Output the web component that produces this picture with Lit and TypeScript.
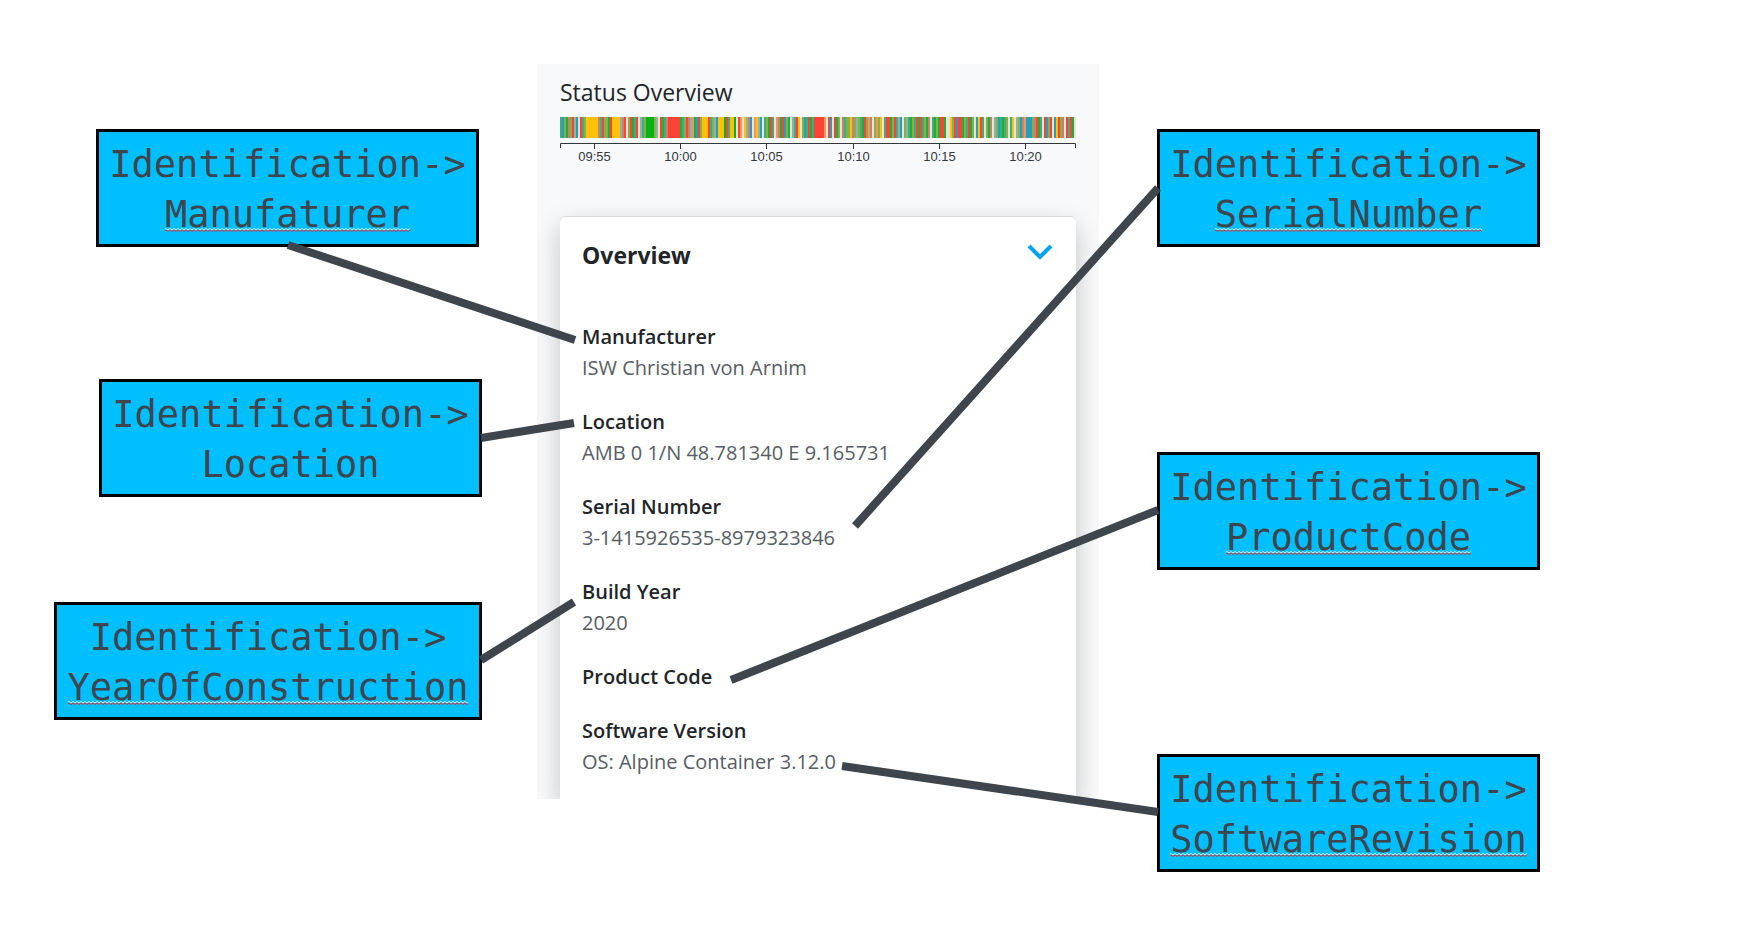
import { LitElement, html, svg, css } from "lit";
import { customElement, property, state } from "lit/decorators.js";
import { styleMap } from "lit/directives/style-map.js";

/* One character per two-pixel slice of the machine status history. */
const HISTORY = [
  "tbngpnrsbwrtn",
  "yyyyyy",
  "ptrnngr",
  "yyy",
  "ysprwnrgtrwstn",
  "GGGG",
  "nswrgtp",
  "rrrrrr",
  "gtnrpsogbrn",
  "yyy",
  "rtnsb",
  "yyyGrtyyG",
  "wrowyspbwoysb",
  "wtngrtwopgrbn",
  "gwstrywnbtrgt",
  "rrrr",
  "rowrbwrgnwptn",
  "nypnsntgrnopw",
  "nonywtrrgnrts",
  "bwnstgntrgrtn",
  "gpwtgngrrg",
  "ww",
  "ynrbrrgntrgnwbyrt",
  "w",
  "ngpwsnbtgtnwtywsnbpo",
  "bbb",
  "nprgtwrbnrwbyrnpwrtrgw",
].join("");

const TONES: Record<string, string> = {
  G: "#07b313",
  g: "#1fae3a",
  r: "#ff4136",
  y: "#ffc107",
  b: "#22a0bd",
  t: "#3fae7c",
  n: "#86b04a",
  p: "#c9806c",
  o: "#f0965e",
  s: "#8fb3a4",
  w: "#e6e4d8",
};

const TICKS = ["09:55", "10:00", "10:05", "10:10", "10:15", "10:20"];

const DETAILS: { label: string; value?: string }[] = [
  { label: "Manufacturer", value: "ISW Christian von Arnim" },
  { label: "Location", value: "AMB 0 1/N 48.781340 E 9.165731" },
  { label: "Serial Number", value: "3-1415926535-8979323846" },
  { label: "Build Year", value: "2020" },
  { label: "Product Code" },
  { label: "Software Version", value: "OS: Alpine Container 3.12.0" },
];

/* Node and connector positions are measured from the panel's top left corner. */
interface Note {
  name: string;
  x: number;
  y: number;
  width: number;
  marked: boolean;
  line: [number, number, number, number];
}

const NOTES: Note[] = [
  { name: "Manufaturer", x: -441, y: 65, width: 383, marked: true, line: [-249, 181, 38, 276] },
  { name: "Location", x: -438, y: 315, width: 383, marked: false, line: [-56, 374, 37, 359] },
  { name: "YearOfConstruction", x: -483, y: 538, width: 428, marked: true, line: [-56, 596, 37, 538] },
  { name: "SerialNumber", x: 620, y: 65, width: 383, marked: true, line: [621, 124, 318, 462] },
  { name: "ProductCode", x: 620, y: 388, width: 383, marked: true, line: [621, 446, 194, 616] },
  { name: "SoftwareRevision", x: 620, y: 690, width: 383, marked: true, line: [621, 748, 305, 702] },
];

@customElement("status-history")
export class StatusHistory extends LitElement {
  static styles = css`
    :host {
      display: block;
    }
    .title {
      margin: 0 0 9px;
      font-size: 23px;
      font-weight: 500;
      line-height: 32px;
      color: #212529;
    }
    .strip {
      display: block;
      width: 100%;
      height: 21px;
    }
    .axis {
      display: block;
      width: 100%;
      height: 30px;
      overflow: visible;
    }
    .axis text {
      font: 13px "Liberation Sans", Arial, sans-serif;
      fill: #33373b;
      text-anchor: middle;
    }
    .axis path {
      fill: none;
      stroke: #33373b;
    }
  `;

  render() {
    return html`
      <h2 class="title">Status Overview</h2>
      <svg
        class="strip"
        viewBox="0 0 ${HISTORY.length} 1"
        preserveAspectRatio="none"
        role="img"
        aria-label="Machine status history"
      >
        ${[...HISTORY].map(
          (c, i) => svg`<rect x=${i} width="1.1" height="1" fill=${TONES[c]}></rect>`
        )}
      </svg>
      <svg class="axis" viewBox="0 0 516 30">
        <path d="M0.5 10V5.5H515.5V10"></path>
        ${TICKS.map((t, i) => {
          const x = Math.round(34 + i * 86.2);
          return svg`<path d="M${x + 0.5} 5.5V11"></path><text x=${x + 0.5} y="23">${t}</text>`;
        })}
      </svg>
    `;
  }
}

@customElement("overview-card")
export class OverviewCard extends LitElement {
  @state() private open = true;

  static styles = css`
    :host {
      display: block;
      border-top: 1px solid #d9dadb;
      border-radius: 6px 6px 0 0;
      background: #fff;
      box-shadow: 0 10px 26px rgba(0, 0, 0, 0.22);
      padding: 22px;
    }
    .head {
      display: flex;
      justify-content: space-between;
      align-items: flex-start;
    }
    .title {
      margin: 0;
      font-size: 23px;
      font-weight: 700;
      line-height: 32px;
      color: #212529;
    }
    .toggle {
      display: flex;
      border: 0;
      padding: 4px 0;
      background: none;
      cursor: pointer;
    }
    .list {
      display: flex;
      flex-direction: column;
      gap: 23px;
      margin: 50px 0 0;
      font-size: 20px;
      line-height: 31px;
    }
    .label {
      font-weight: 600;
      color: #212529;
    }
    .value {
      margin: 0;
      color: #575d64;
    }
  `;

  render() {
    return html`
      <div class="head">
        <h3 class="title">Overview</h3>
        <button
          class="toggle"
          aria-label="Toggle overview"
          aria-expanded=${this.open ? "true" : "false"}
          @click=${() => (this.open = !this.open)}
        >
          <svg width="28" height="20" viewBox="0 0 28 20" fill="none" stroke="#00a3e8" stroke-width="4">
            <path d="M3 3L14 14L25 3"></path>
          </svg>
        </button>
      </div>
      ${this.open
        ? html`<dl class="list">
            ${DETAILS.map(
              (d) => html`<div>
                <dt class="label">${d.label}</dt>
                ${d.value ? html`<dd class="value">${d.value}</dd>` : null}
              </div>`
            )}
          </dl>`
        : null}
    `;
  }
}

@customElement("node-note")
export class NodeNote extends LitElement {
  @property() name = "";
  @property({ type: Boolean }) marked = false;

  static styles = css`
    :host {
      display: block;
      box-sizing: border-box;
      border: 3px solid #000;
      background: #00bfff;
      padding: 8px 0 4px;
      color: #3e454c;
      font: 37px/50px "DejaVu Sans Mono", monospace;
      text-align: center;
      white-space: nowrap;
    }
    .row {
      display: flex;
      justify-content: center;
    }
    .marked {
      background: url("data:image/svg+xml,%3Csvg xmlns='http://www.w3.org/2000/svg' width='4' height='4' fill='none'%3E%3Cpath d='M-1 2L1 0.5L3 2L5 0.5' stroke='%23d5eef8'/%3E%3Cpath d='M-1 3.5L1 2L3 3.5L5 2' stroke='%23c8323c'/%3E%3C/svg%3E")
        0 38px / 4px 4px repeat-x;
    }
  `;

  render() {
    return html`
      <div class="row">Identification-&gt;</div>
      <div class="row"><span class=${this.marked ? "marked" : ""}>${this.name}</span></div>
    `;
  }
}

@customElement("app-root")
export class AppRoot extends LitElement {
  static styles = css`
    :host {
      display: grid;
      grid-template-columns: 537fr 562px 645fr;
      box-sizing: border-box;
      min-height: 100vh;
      padding-top: 64px;
      background: #fff;
      font-family: "Open Sans", "Noto Sans", sans-serif;
      overflow: hidden;
    }
    .diagram {
      grid-column: 2;
      align-self: start;
      position: relative;
    }
    .panel {
      display: flex;
      flex-direction: column;
      gap: 48px;
      padding: 12px 23px 0;
      background: #f8f9fb;
      overflow: hidden;
    }
    .note {
      position: absolute;
    }
    .lines {
      position: absolute;
      inset: 0;
      width: 100%;
      height: 100%;
      overflow: visible;
      pointer-events: none;
      stroke: #3e454c;
      stroke-width: 8;
    }
  `;

  render() {
    return html`
      <main class="diagram">
        <section class="panel">
          <status-history></status-history>
          <overview-card></overview-card>
        </section>
        ${NOTES.map(
          (n) => html`<node-note
            class="note"
            .name=${n.name}
            .marked=${n.marked}
            style=${styleMap({ left: `${n.x}px`, top: `${n.y}px`, width: `${n.width}px` })}
          ></node-note>`
        )}
        <svg class="lines" aria-hidden="true">
          ${NOTES.map(
            ({ line: [x1, y1, x2, y2] }) => svg`<line x1=${x1} y1=${y1} x2=${x2} y2=${y2}></line>`
          )}
        </svg>
      </main>
    `;
  }
}
